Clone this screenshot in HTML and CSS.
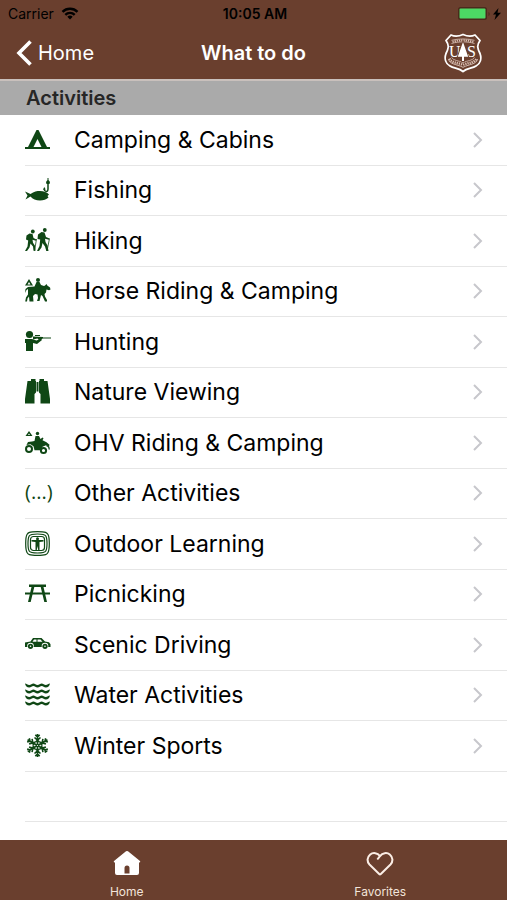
FILE: index.html
```html
<!DOCTYPE html>
<html lang="en">

<head>
    <meta charset="UTF-8">
    <meta name="viewport" content="width=device-width, initial-scale=1.0">
    <title>What to do</title>
    <link rel="stylesheet" href="styles.css">
</head>

<body>

    <header class="header">
        <div class="status-bar">
            <div class="carrier">
                <span>Carrier</span>
                <svg width="18" height="13" viewBox="0 0 18 13" fill="none" stroke="#000" stroke-width="2.4">
                    <path d="M1.5 4.8a10.6 10.6 0 0 1 15 0" />
                    <path d="M4.3 7.8a6.7 6.7 0 0 1 9.4 0" />
                    <path d="M9 12.5 6.3 9.8a3.8 3.8 0 0 1 5.4 0z" fill="#000" stroke="none" />
                </svg>
            </div>
            <span class="time">10:05 AM</span>
            <div class="battery">
                <svg width="44" height="14" viewBox="0 0 44 14">
                    <rect x="0" y="0" width="29" height="13" rx="2.5" fill="#4a2a1c" />
                    <rect x="1.5" y="1.5" width="26" height="10" rx="1" fill="#4cd964" />
                    <path d="M30.5 5v4c1.6-.5 1.6-3.5 0-4z" fill="#4a2a1c" />
                    <path d="M40.500 1 35 7.500h3L36.500 13 43 5.700h-3.500z" fill="#000" />
                </svg>
            </div>
        </div>
        <div class="nav-bar">
            <a class="back" href="#home">
                <svg width="16" height="26" viewBox="0 0 16 26" fill="none" stroke="#fff" stroke-width="3.6">
                    <path d="M14.5 1.5 3 13l11.5 11.5" />
                </svg>
                <span>Home</span>
            </a>
            <h1 class="title">What to do</h1>
            <a class="logo" href="#about" aria-label="US Forest Service">
                <svg width="38" height="40" viewBox="0 0 38 40">
                    <path d="M7 2c4 1.800 8 1.300 12-.5 4 1.800 8 2.300 12 .5l5 5.500c-3.500 5-2.500 8 0 13 1.800 5 .5 10-4 12.500-4 2.500-9 2-13 5.500-4-3.500-9-3-13-5.500C1.500 30.500.2 25.500 2 20.500c2.500-5 3.500-8 0-13z" fill="none" stroke="#fff" stroke-width="1.800" stroke-linejoin="round" />
                    <path d="M7.500 7.300c7-1.800 16-1.800 23 0M7.500 10.500c7-2.200 16-2.200 23 0" fill="none" stroke="#ecd9d0" stroke-width=".7" />
                    <path d="M8.500 8.800c6.500-2 14.500-2 21 0" fill="none" stroke="#d9bfb3" stroke-width="2" stroke-dasharray="1.300 .9" />
                    <path d="M4.500 26c1 5.500 8 5 14.500 8.300 6.500-3.300 13.500-2.800 14.500-8.300" fill="none" stroke="#ecd9d0" stroke-width=".8" />
                    <path d="M5.500 25.500c2 4.500 8 4 13.500 6.300 5.500-2.300 11.500-1.800 13.500-6.300" fill="none" stroke="#d9bfb3" stroke-width="2.400" stroke-dasharray="1.300 .9" />
                    <path d="M7.500 24.500c2.500 3.500 7 3 11.500 5 4.500-2 9-1.500 11.500-5" fill="none" stroke="#ecd9d0" stroke-width=".7" />
                    <text class="logo-text" x="5" y="24">U</text>
                    <text class="logo-text" x="23" y="24">S</text>
                    <path d="m19 9 5.200 14.800h-4.200V28h-2v-4.200h-4.200z" fill="#fff" stroke="#6a3f2e" stroke-width="1.600" paint-order="stroke" />
                </svg>
            </a>
        </div>
    </header>

    <main class="content">
        <h2 class="section-title">Activities</h2>
        <ul class="list">
            <li class="row">
                <a class="link" href="#camping">
                    <svg class="icon" viewBox="0 0 26 26">
                        <path d="M11.500 3h2L22 20h3v2H0v-2h3zM12.500 12 8.500 20h8z" fill-rule="evenodd" />
                    </svg>
                    <span class="label">Camping &amp; Cabins</span>
                    <svg class="chevron" viewBox="0 0 10 18"><path d="m1 2 7 7-7 7" /></svg>
                </a>
            </li>
            <li class="row">
                <a class="link" href="#fishing">
                    <svg class="icon" viewBox="0 0 26 26">
                        <path d="M0 14.500 5.500 17C9 14.500 12 14 15 14c4 0 7 1.500 9 3.500l-1.500 1.500 1 1.500c-2 2-5 3-8.500 3-4 0-7.500-1.500-9.500-4L.500 22.500l2-4z" />
                        <path d="M23 4v8c0 3.500-3.500 3-4 0" fill="none" stroke="#0f4715" stroke-width="1.500" />
                        <path d="M22.500 1h1v2l1.500 2-.5 2h-3L21 5l1.500-2zM18 12.500l1.300-2.500 1.500 2.500z" />
                    </svg>
                    <span class="label">Fishing</span>
                    <svg class="chevron" viewBox="0 0 10 18"><path d="m1 2 7 7-7 7" /></svg>
                </a>
            </li>
            <li class="row">
                <a class="link" href="#hiking">
                    <svg class="icon" viewBox="0 0 26 26">
                        <circle cx="7.800" cy="3.500" r="1.900" />
                        <path d="M4.500 5.500 7.500 6l1 4 3 1.500-.5 1.200-3.500-1 .5 3 2 3 .5 5H8.500L8 18.500 5.500 15.500l-1 4L2 23H0l2.500-4.500.7-6L1 11.500l.5-4z" />
                        <circle cx="19.800" cy="2" r="1.900" />
                        <path d="m16.500 4 3 .5 1.500 4.500 3.500 1.500-.5 1.200-4-1 .5 3.300 2 3.500 1 5.500h-2.200l-1.300-4.500-2.500-3.500-1 4.500L14 23h-2l2.500-5 .7-6.500-2.700-.5.5-4.500z" />
                        <path d="M11.500 11 9.500 23M24.500 10.500 22 23" fill="none" stroke="#0f4715" stroke-width=".8" />
                    </svg>
                    <span class="label">Hiking</span>
                    <svg class="chevron" viewBox="0 0 10 18"><path d="m1 2 7 7-7 7" /></svg>
                </a>
            </li>
            <li class="row">
                <a class="link" href="#horse-riding">
                    <svg class="icon" viewBox="0 0 26 26">
                        <path d="M4 1 8 7.500H0zM4 4 2.500 6.500h3z" fill-rule="evenodd" />
                        <circle cx="13" cy="2" r="2" />
                        <path d="M11.500 4h3l1.500 3 3 1 1-.5 1.500-1.500.8 1.500L25 9.500l.5 2-1.500.8-2.500-.8-.5 3-1.500 1.500.5 2.500 2 3.500v1.500h-2l-2.500-5.500-1.500-1-.5 2-1 4h-2.500l1-3-.5-3.500-2.500-.5-2 2 .5 5.500H4.500l-.5-5-1.500 2-.5 3H.2l.8-4 2-3V11l-1.500 1L0 15l.5-4L3 9l6.500-.5z" />
                    </svg>
                    <span class="label">Horse Riding &amp; Camping</span>
                    <svg class="chevron" viewBox="0 0 10 18"><path d="m1 2 7 7-7 7" /></svg>
                </a>
            </li>
            <li class="row">
                <a class="link" href="#hunting">
                    <svg class="icon" viewBox="0 0 26 26">
                        <circle cx="4.500" cy="5.500" r="3.600" />
                        <path d="M0 10h7l4.500 1.500L16 9.500l1 1.500-5 4-4-1V22H1v-8H0z" />
                        <path d="m8 7.500 10 .5v.5h8v1h-8l-4 1.500-1.500-1.500L8 10.500zM10 6h5v1h-5z" />
                    </svg>
                    <span class="label">Hunting</span>
                    <svg class="chevron" viewBox="0 0 10 18"><path d="m1 2 7 7-7 7" /></svg>
                </a>
            </li>
            <li class="row">
                <a class="link" href="#nature-viewing">
                    <svg class="icon" viewBox="0 0 26 26">
                        <path d="M6 0h4.500v2H11v11.500l-1.500 1.500v9.500H0V20L2.500 2H6zM14.500 0H19v2h3.500L25 20v4.500h-9.500V15L14 13.500V2h.5zM11.500 3h2v9.500h-2z" />
                    </svg>
                    <span class="label">Nature Viewing</span>
                    <svg class="chevron" viewBox="0 0 10 18"><path d="m1 2 7 7-7 7" /></svg>
                </a>
            </li>
            <li class="row">
                <a class="link" href="#ohv-riding">
                    <svg class="icon" viewBox="0 0 26 26">
                        <path d="M4 1 7.500 6h-7zM4 3.500 3 5h2z" fill-rule="evenodd" />
                        <circle cx="12.500" cy="3.500" r="1.700" />
                        <path d="M10.500 6h3.500l1.500 3 2-1.500 1 .8-1 2 4 2 3 2.500-.5 1.500-3-1-3.500 1.500-2 3.500H9.500l-1-4-3-2-4 .7L3 12l4-.5L9.500 11z" />
                        <circle cx="4" cy="19" r="3" fill="none" stroke="#0f4715" stroke-width="2" />
                        <circle cx="18.500" cy="20.500" r="2.600" fill="none" stroke="#0f4715" stroke-width="2" />
                        <path d="M21.500 15.500c2 .5 3 2 2.500 4" fill="none" stroke="#0f4715" stroke-width="1.300" />
                    </svg>
                    <span class="label">OHV Riding &amp; Camping</span>
                    <svg class="chevron" viewBox="0 0 10 18"><path d="m1 2 7 7-7 7" /></svg>
                </a>
            </li>
            <li class="row">
                <a class="link" href="#other">
                    <span class="icon dots">(...)</span>
                    <span class="label">Other Activities</span>
                    <svg class="chevron" viewBox="0 0 10 18"><path d="m1 2 7 7-7 7" /></svg>
                </a>
            </li>
            <li class="row">
                <a class="link" href="#outdoor-learning">
                    <svg class="icon" viewBox="0 0 26 26">
                        <g fill="none" stroke="#0f4715" stroke-width="1.200">
                            <path d="M12.500.7C21 .7 22 1.700 23 3.500s1.300 4 1.300 9-.3 7.200-1.300 9-2 2.800-10.500 2.800S3 23.300 2 21.500.7 17.500.7 12.500.9 5.300 2 3.500 4 .7 12.500.7z" />
                            <path d="M12.500 3c6.500 0 7.500.7 8.300 2s1.200 3.500 1.200 7.500-.4 6.200-1.200 7.500-1.800 2-8.300 2-7.500-.7-8.300-2S3 16.500 3 12.500 3.400 6.300 4.200 5 6 3 12.500 3z" />
                            <rect x="5.500" y="5.500" width="14" height="14" rx="3" />
                        </g>
                        <circle cx="12.500" cy="7.700" r="1.500" />
                        <path d="M6.500 9h12v1.500L14.500 11v8h-1.300l-.7-4-.7 4h-1.300v-8l-4-.5z" />
                    </svg>
                    <span class="label">Outdoor Learning</span>
                    <svg class="chevron" viewBox="0 0 10 18"><path d="m1 2 7 7-7 7" /></svg>
                </a>
            </li>
            <li class="row">
                <a class="link" href="#picnicking">
                    <svg class="icon" viewBox="0 0 26 26">
                        <path d="M4 3.500h17V6h-2.500l3.500 15h-2.700L15.700 6H9.300L5.700 21H3L6.500 6H4z" />
                        <path d="M0 11.500h25v2H0z" />
                    </svg>
                    <span class="label">Picnicking</span>
                    <svg class="chevron" viewBox="0 0 10 18"><path d="m1 2 7 7-7 7" /></svg>
                </a>
            </li>
            <li class="row">
                <a class="link" href="#scenic-driving">
                    <svg class="icon" viewBox="0 0 26 26">
                        <path d="M0 10.500 5.500 9.500 8 6h8.500L20 9.500l4 .8 1.500 2v2.700H0zM7.500 9.700h4V7.500H9zM12.500 9.700h5L15.500 7.500h-3z" fill-rule="evenodd" />
                        <circle cx="5.500" cy="14" r="3.300" fill="#fff" />
                        <circle cx="20" cy="14" r="3.300" fill="#fff" />
                        <circle cx="5.500" cy="14.300" r="2.600" />
                        <circle cx="20" cy="14.300" r="2.600" />
                        <circle cx="5.500" cy="14.300" r=".8" fill="#fff" />
                        <circle cx="20" cy="14.300" r=".8" fill="#fff" />
                    </svg>
                    <span class="label">Scenic Driving</span>
                    <svg class="chevron" viewBox="0 0 10 18"><path d="m1 2 7 7-7 7" /></svg>
                </a>
            </li>
            <li class="row">
                <a class="link" href="#water">
                    <svg class="icon" viewBox="0 0 26 26">
                        <path id="wave" d="M0 1.500c1.500.2 2.500 1.500 4.200 1.500s2.800-1.500 4.200-1.500S11 3 12.500 3s2.800-1.500 4.200-1.500S19.300 3 20.800 3s2.700-1.300 4.200-1.500c-.5 2.500-2 4-4.200 4-1.800 0-2.700-1.500-4.100-1.500s-2.400 1.500-4.200 1.500S9.800 4 8.400 4 6 5.500 4.200 5.500C2 5.500.5 4 0 1.500z" />
                        <use href="#wave" y="6" />
                        <use href="#wave" y="12" />
                        <use href="#wave" y="18" />
                    </svg>
                    <span class="label">Water Activities</span>
                    <svg class="chevron" viewBox="0 0 10 18"><path d="m1 2 7 7-7 7" /></svg>
                </a>
            </li>
            <li class="row">
                <a class="link" href="#winter">
                    <svg class="icon" viewBox="0 0 26 26">
                        <defs>
                            <path id="flake-arm" d="M12.500 12V1M10.300 1.800l2.200 2 2.200-2M9.500 4.500l3 2.700 3-2.700M10.500 9l2-1.700 2 1.700" />
                        </defs>
                        <g fill="none" stroke="#0f4715" stroke-width="1.600">
                            <use href="#flake-arm" />
                            <use href="#flake-arm" transform="rotate(60 12.500 12.500)" />
                            <use href="#flake-arm" transform="rotate(120 12.500 12.500)" />
                            <use href="#flake-arm" transform="rotate(180 12.500 12.500)" />
                            <use href="#flake-arm" transform="rotate(240 12.500 12.500)" />
                            <use href="#flake-arm" transform="rotate(300 12.500 12.500)" />
                        </g>
                    </svg>
                    <span class="label">Winter Sports</span>
                    <svg class="chevron" viewBox="0 0 10 18"><path d="m1 2 7 7-7 7" /></svg>
                </a>
            </li>
            <li class="row"></li>
        </ul>
    </main>

    <nav class="tab-bar">
        <a class="tab" href="#home">
            <svg width="28" height="26" viewBox="0 0 28 26" fill="#fff">
                <path d="M13 1.300q1-.8 2 0L27 11q.8 1.200-.5 1.500H26V23q0 2-2 2H4q-2 0-2-2V12.500h-.5Q.2 12.200 1 11zM11.500 23.500h5V18q0-2.500-2.500-2.500T11.500 18z" fill-rule="evenodd" />
            </svg>
            <span>Home</span>
        </a>
        <a class="tab" href="#favorites">
            <svg width="28" height="26" viewBox="0 0 28 26" fill="none" stroke="#fbeee6" stroke-width="2" stroke-linejoin="round" stroke-linecap="round">
                <path d="M11.800 8.800 14 6.200c2.500-3.500 7-4 9.800-1.700 3.200 2.700 3.500 7 .7 10L14.800 24q-.8.700-1.600 0L3.500 14.500c-2.800-3-2.500-7.300.7-10C7 2.200 11.500 2.700 14 6.200" />
            </svg>
            <span>Favorites</span>
        </a>
    </nav>

</body>

</html>
```

FILE: styles.css
```css
* {
    box-sizing: border-box;
}

body {
    margin: 0;
    min-height: 100vh;
    display: flex;
    flex-direction: column;
    font-family: Inter, "Liberation Sans", sans-serif;
    background-color: #fff;
    color: #000;
}

a {
    color: inherit;
    text-decoration: none;
}

svg {
    display: block;
    flex-shrink: 0;
}

/* Header */
.header {
    background-color: #6a3f2e;
    border-bottom: 2px solid #c9c0bc;
}

.status-bar {
    display: grid;
    grid-template-columns: 1fr auto 1fr;
    align-items: center;
    height: 27px;
    padding: 0 5px 0 8px;
    font-size: 14px;
}

.carrier {
    display: flex;
    align-items: center;
    gap: 7px;
}

.time {
    font-weight: 600;
}

.battery {
    justify-self: end;
}

.nav-bar {
    display: grid;
    grid-template-columns: 1fr auto 1fr;
    align-items: center;
    height: 52px;
    padding: 0 16px;
    color: #fff;
}

.back {
    display: flex;
    align-items: center;
    gap: 6px;
    font-size: 20px;
}

.title {
    margin: 0;
    font-size: 20px;
    font-weight: 600;
}

.logo {
    justify-self: end;
    margin-right: 9px;
}

.logo-text {
    fill: #fff;
    font-family: "Liberation Serif", serif;
    font-size: 16px;
}

/* Activity list */
.content {
    flex: 1;
    display: flex;
    flex-direction: column;
}

.section-title {
    margin: 0;
    padding: 0 26px;
    background-color: #aaa;
    color: #262626;
    font-size: 20px;
    font-weight: 600;
    line-height: 34px;
}

.list {
    flex: 1;
    display: grid;
    grid-auto-rows: 1fr;
    margin: 0;
    padding: 0 0 18px 25px;
    list-style: none;
}

.row {
    min-height: 50px;
    border-bottom: 1px solid #e6e6e6;
}

.link {
    display: flex;
    align-items: center;
    height: 100%;
    padding-right: 24px;
}

.icon {
    width: 26px;
    height: 26px;
    margin-right: 23px;
    fill: #0f4715;
}

.dots {
    color: #0f4715;
    font-family: "Open Sans", sans-serif;
    font-size: 20px;
    line-height: 24px;
    text-align: center;
}

.label {
    flex: 1;
    font-size: 23px;
}

.chevron {
    width: 10px;
    height: 18px;
    fill: none;
    stroke: #c7c7cc;
    stroke-width: 2;
}

/* Bottom tabs */
.tab-bar {
    display: grid;
    grid-template-columns: 1fr 1fr;
    height: 60px;
    background-color: #6a3f2e;
    color: #f3e4da;
}

.tab {
    display: flex;
    flex-direction: column;
    align-items: center;
    gap: 8px;
    padding-top: 10px;
    font-size: 12px;
    line-height: 16px;
}
```
